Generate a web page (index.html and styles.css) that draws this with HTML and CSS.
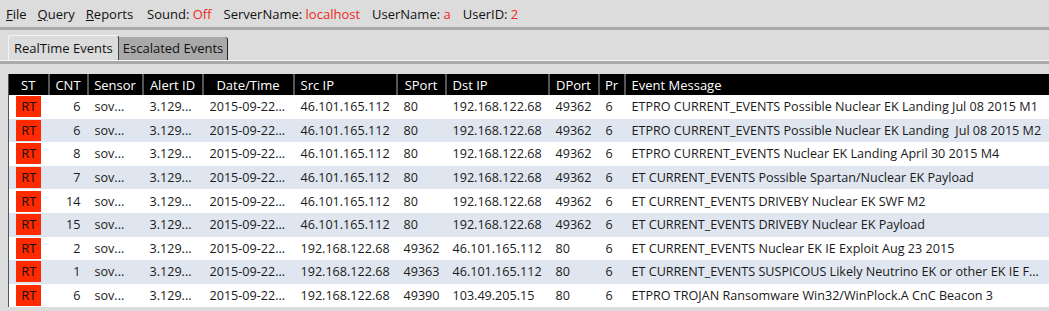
FILE: index.html
```html
<!DOCTYPE html>
<html lang="en">
<head>
    <meta charset="UTF-8">
    <title>Event Viewer</title>
    <link rel="stylesheet" href="styles.css">
</head>
<body>

    <div class="menubar">
        <span class="menu"><u>F</u>ile</span>
        <span class="menu"><u>Q</u>uery</span>
        <span class="menu"><u>R</u>eports</span>
        <span class="status">Sound: <b>Off</b></span>
        <span class="status">ServerName: <b>localhost</b></span>
        <span class="status">UserName: <b>a</b></span>
        <span class="status">UserID: <b>2</b></span>
    </div>
    <div class="divider"></div>

    <div class="tabs">
        <div class="tab active">RealTime Events</div>
        <div class="tab">Escalated Events</div>
    </div>

    <div class="panel">
        <table class="events">
            <colgroup>
                <col style="width:40px"><col style="width:39px"><col style="width:55px">
                <col style="width:60px"><col style="width:91px"><col style="width:103px">
                <col style="width:49px"><col style="width:103px"><col style="width:50px">
                <col style="width:26px"><col>
            </colgroup>
            <thead>
                <tr>
                    <th>ST</th><th>CNT</th><th>Sensor</th><th>Alert ID</th><th>Date/Time</th>
                    <th class="left">Src IP</th><th>SPort</th><th class="left">Dst IP</th>
                    <th>DPort</th><th>Pr</th><th class="left">Event Message</th>
                </tr>
            </thead>
            <tbody id="rows"></tbody>
        </table>
    </div>

    <script>
        const events = [
            [6, "46.101.165.112", 80, "192.168.122.68", 49362, "ETPRO CURRENT_EVENTS Possible Nuclear EK Landing Jul 08 2015 M1"],
            [6, "46.101.165.112", 80, "192.168.122.68", 49362, "ETPRO CURRENT_EVENTS Possible Nuclear EK Landing\u00a0 Jul 08 2015 M2"],
            [8, "46.101.165.112", 80, "192.168.122.68", 49362, "ETPRO CURRENT_EVENTS Nuclear EK Landing April 30 2015 M4"],
            [7, "46.101.165.112", 80, "192.168.122.68", 49362, "ET CURRENT_EVENTS Possible Spartan/Nuclear EK Payload"],
            [14, "46.101.165.112", 80, "192.168.122.68", 49362, "ET CURRENT_EVENTS DRIVEBY Nuclear EK SWF M2"],
            [15, "46.101.165.112", 80, "192.168.122.68", 49362, "ET CURRENT_EVENTS DRIVEBY Nuclear EK Payload"],
            [2, "192.168.122.68", 49362, "46.101.165.112", 80, "ET CURRENT_EVENTS Nuclear EK IE Exploit Aug 23 2015"],
            [1, "192.168.122.68", 49363, "46.101.165.112", 80, "ET CURRENT_EVENTS SUSPICOUS Likely Neutrino EK or other EK IE F..."],
            [6, "192.168.122.68", 49390, "103.49.205.15", 80, "ETPRO TROJAN Ransomware Win32/WinPlock.A CnC Beacon 3"]
        ];

        const tbody = document.getElementById("rows");
        events.forEach(e => {
            const tr = document.createElement("tr");
            tr.innerHTML =
                `<td class="st"><span class="badge">RT</span></td>` +
                `<td class="cnt">${e[0]}</td>` +
                `<td>sov...</td><td>3.129...</td><td>2015-09-22...</td>` +
                `<td>${e[1]}</td><td>${e[2]}</td><td>${e[3]}</td><td>${e[4]}</td>` +
                `<td>6</td><td class="msg">${e[5]}</td>`;
            tbody.appendChild(tr);
        });
    </script>

</body>
</html>
```

FILE: styles.css
```css
body {
    margin: 0;
    font-family: "Open Sans", "Noto Sans", sans-serif;
    font-size: 13px;
    color: #111;
    background-color: #dcdcdc;
    overflow: hidden;
}
.menubar {
    height: 27px;
    display: flex;
    align-items: center;
    padding-left: 6px;
    white-space: nowrap;
}
.menu {
    margin-right: 11px;
}
.menu + .status {
    margin-left: 3px;
}
.status {
    margin-right: 12px;
}
.status b {
    font-weight: normal;
    color: #f0281e;
}
.divider {
    height: 3px;
    background-color: #a9a9a9;
}
.tabs {
    display: flex;
    padding: 6px 0 0 8px;
    height: 24px;
    align-items: flex-end;
}
.tab {
    height: 23px;
    line-height: 23px;
    padding: 0 4px 0 4px;
    background-color: #a9a9a9;
    border-right: 1px solid #222;
    border-top-right-radius: 3px;
    white-space: nowrap;
}
.tab.active {
    height: 24px;
    line-height: 24px;
    padding: 0 5px 0 5px;
    background-color: #dcdcdc;
    border-top: 1px solid #f4f4f4;
    border-left: 1px solid #f4f4f4;
    border-right: 1px solid #444;
    border-top-left-radius: 3px;
}
.panel {
    border-top: 1px solid #f8f8f8;
    box-shadow: inset 0 3px 0 #a9a9a9;
    padding: 13px 0 0 8px;
}
.events {
    width: 1041px;
    table-layout: fixed;
    border-collapse: collapse;
    border-left: 1px solid #555;
    background-color: #fff;
}
.events th {
    height: 21px;
    padding: 0 2px;
    background-color: #000;
    color: #fff;
    font-weight: normal;
    text-align: center;
    border-left: 2px solid #555;
    white-space: nowrap;
    overflow: hidden;
}
.events th:first-child {
    border-left: none;
}
.events th.left {
    text-align: left;
    padding-left: 6px;
}
.events td {
    height: 23.6px;
    padding: 0 0 0 7px;
    font-size: 12.6px;
    white-space: nowrap;
    overflow: hidden;
    color: #1a1a1a;
}
.events tbody tr:nth-child(even) td {
    background-color: #dfe6ef;
}
.events td.st {
    padding: 0;
    text-align: center;
}
.events td.cnt {
    text-align: right;
    padding: 0 7px 0 0;
}
.events td.msg {
    text-overflow: clip;
}
.badge {
    display: inline-block;
    width: 25px;
    height: 21px;
    line-height: 21px;
    font-size: 13px;
    background-color: #ff2a00;
    color: #111;
    text-align: center;
    vertical-align: middle;
}
```
